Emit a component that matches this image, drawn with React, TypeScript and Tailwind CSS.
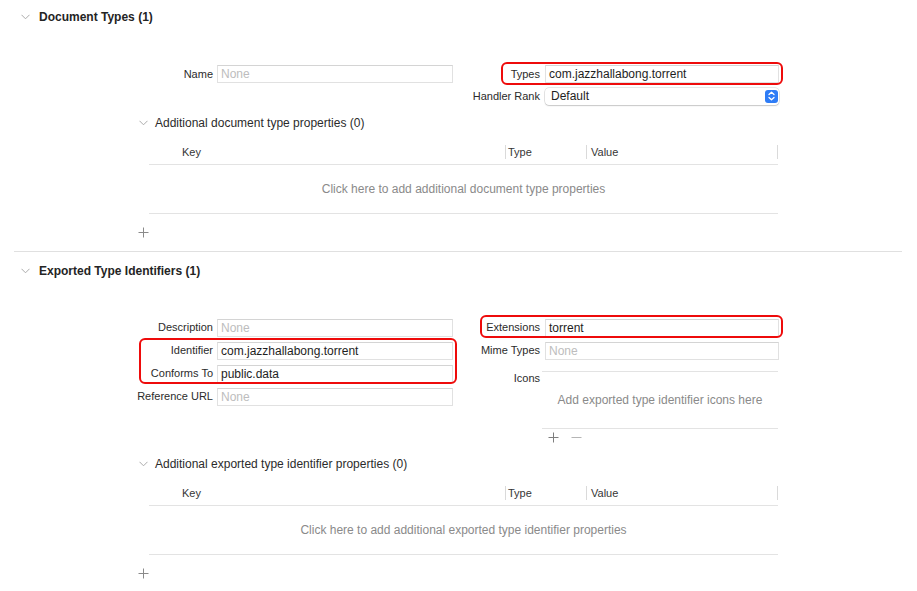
import React from "react";

const Chevron = () => (
  <svg width="9" height="6" viewBox="0 0 9 6" className="shrink-0">
    <path d="M0.5 0.8 L4.5 4.8 L8.5 0.8" fill="none" stroke="#ababab" strokeWidth="1" />
  </svg>
);

const Plus = ({ color = "#8a8a8a" }: { color?: string }) => (
  <svg width="11" height="11" viewBox="0 0 11 11" className="shrink-0">
    <path d="M5.5 0.5v10M0.5 5.5h10" stroke={color} strokeWidth="1" fill="none" />
  </svg>
);

const Minus = ({ color = "#b5b5b5" }: { color?: string }) => (
  <svg width="11" height="11" viewBox="0 0 11 11" className="shrink-0">
    <path d="M0.5 5.5h10" stroke={color} strokeWidth="1" fill="none" />
  </svg>
);

const Field = ({ value, placeholder }: { value?: string; placeholder?: string }) => (
  <div className="h-[18px] flex-1 bg-white border border-[#e1e1e1] border-t-[#d4d4d4] flex items-center pl-[3px] text-[12px] leading-none whitespace-nowrap overflow-hidden">
    {value ? (
      <span className="text-[#1e1e1e]">{value}</span>
    ) : (
      <span className="text-[#bdbdbd]">{placeholder}</span>
    )}
  </div>
);

const LeftRow = ({ label, children, h }: { label: string; children: React.ReactNode; h: string }) => (
  <div className={"flex items-center " + h}>
    <div className="w-[87px] pr-[4px] text-right text-[11px] text-[#2b2b2b] whitespace-nowrap">{label}</div>
    {children}
  </div>
);

const RightRow = ({ label, children, h }: { label: string; children: React.ReactNode; h: string }) => (
  <div className={"flex items-center " + h}>
    <div className="w-[85px] pr-[5px] text-right text-[11px] text-[#2b2b2b] whitespace-nowrap">{label}</div>
    {children}
  </div>
);

const RedBox = ({ cls }: { cls: string }) => (
  <div className={"absolute pointer-events-none rounded-[6px] border-2 border-[#ee0b0b] " + cls} />
);

const Table = ({ text }: { text: string }) => (
  <div className="ml-[149px] w-[629px] mt-[6px]">
    <div className="h-[25px] flex items-center border-b border-[#e3e3e3] text-[11px] text-[#363636]">
      <div className="w-[356px] pl-[33px]">Key</div>
      <div className="w-px h-[14px] bg-[#dadada]" />
      <div className="w-[80px] pl-[2px]">Type</div>
      <div className="w-px h-[14px] bg-[#dadada]" />
      <div className="flex-1 pl-[4px]">Value</div>
      <div className="w-px h-[14px] bg-[#dadada]" />
    </div>
    <div className="h-[49px] flex items-center justify-center border-b border-[#e3e3e3] text-[12px] text-[#8a8a8a]">
      {text}
    </div>
  </div>
);

const SectionHeader = ({ title, cls }: { title: string; cls: string }) => (
  <div className={"h-[34px] flex items-center pl-[21px] gap-[9px] " + cls}>
    <Chevron />
    <span className="text-[12px] font-bold text-[#242424]">{title}</span>
  </div>
);

const SubHeader = ({ title, cls }: { title: string; cls: string }) => (
  <div className={"h-[22px] flex items-center ml-[139px] gap-[7px] " + cls}>
    <Chevron />
    <span className="text-[12px] text-[#2b2b2b]">{title}</span>
  </div>
);

export default function App() {
  return (
    <div className="w-[917px] h-[591px] bg-white overflow-hidden font-['Liberation_Sans',Arial,sans-serif] flex flex-col">
      {/* Section 1 */}
      <SectionHeader title="Document Types (1)" cls="" />
      <div className="mt-[29px] ml-[130px] flex gap-[7px]">
        <div className="w-[323px] flex flex-col">
          <LeftRow label="Name" h="h-[22px]">
            <Field placeholder="None" />
          </LeftRow>
        </div>
        <div className="w-[319px] flex flex-col">
          <div className="relative">
            <RightRow label="Types" h="h-[22px]">
              <Field value="com.jazzhallabong.torrent" />
            </RightRow>
            <RedBox cls="left-[41px] top-[-1px] w-[282px] h-[23px]" />
          </div>
          <RightRow label="Handler Rank" h="h-[22px]">
            <div className="h-[17px] flex-1 rounded-[4px] bg-white shadow-[0_0_0_0.5px_rgba(0,0,0,0.18),0_1px_1.5px_rgba(0,0,0,0.14)] flex items-center pl-[6px] pr-[1px] text-[12px] text-[#1e1e1e]">
              <span className="flex-1">Default</span>
              <div className="w-[13px] h-[13px] rounded-[3px] bg-[#2e7cf6] flex items-center justify-center">
                <svg width="7" height="10" viewBox="0 0 7 10">
                  <path d="M1 3.6 L3.5 1.3 L6 3.6 M1 6.4 L3.5 8.7 L6 6.4" fill="none" stroke="#fff" strokeWidth="1.3" strokeLinecap="round" strokeLinejoin="round" />
                </svg>
              </div>
            </div>
          </RightRow>
        </div>
      </div>
      <SubHeader title="Additional document type properties (0)" cls="mt-[5px]" />
      <Table text="Click here to add additional document type properties" />
      <div className="mt-[8px] h-[20px] flex items-center ml-[138px]">
        <Plus />
      </div>
      <div className="mt-[9px] ml-[14px] w-[888px] h-px bg-[#e0e0e0] shrink-0" />

      {/* Section 2 */}
      <SectionHeader title="Exported Type Identifiers (1)" cls="mt-[2px]" />
      <div className="mt-[28px] ml-[130px] flex gap-[7px] items-start">
        <div className="w-[323px] flex flex-col">
          <LeftRow label="Description" h="h-[23px]">
            <Field placeholder="None" />
          </LeftRow>
          <div className="relative">
            <LeftRow label="Identifier" h="h-[23px]">
              <Field value="com.jazzhallabong.torrent" />
            </LeftRow>
            <LeftRow label="Conforms To" h="h-[23px]">
              <Field value="public.data" />
            </LeftRow>
            <RedBox cls="left-[9px] top-[-1px] w-[318px] h-[46px]" />
          </div>
          <LeftRow label="Reference URL" h="h-[23px]">
            <Field placeholder="None" />
          </LeftRow>
        </div>
        <div className="w-[319px] flex flex-col">
          <div className="relative">
            <RightRow label="Extensions" h="h-[23px]">
              <Field value="torrent" />
            </RightRow>
            <RedBox cls="left-[20px] top-[-1px] w-[303px] h-[23px]" />
          </div>
          <RightRow label="Mime Types" h="h-[23px]">
            <Field placeholder="None" />
          </RightRow>
          <div className="mt-[9px] flex">
            <div className="w-[82px] pr-[2px] text-right text-[11px] leading-[14px] text-[#2b2b2b]">Icons</div>
            <div className="w-[236px] flex flex-col">
              <div className="h-[58px] border-t border-b border-[#e3e3e3] flex items-center justify-center text-[12px] text-[#8a8a8a]">
                Add exported type identifier icons here
              </div>
              <div className="h-[17px] flex items-center gap-[12px] pl-[6px]">
                <Plus color="#7e7e7e" />
                <Minus />
              </div>
            </div>
          </div>
        </div>
      </div>
      <SubHeader title="Additional exported type identifier properties (0)" cls="mt-[7px]" />
      <Table text="Click here to add additional exported type identifier properties" />
      <div className="mt-[8px] h-[20px] flex items-center ml-[138px]">
        <Plus />
      </div>
    </div>
  );
}
